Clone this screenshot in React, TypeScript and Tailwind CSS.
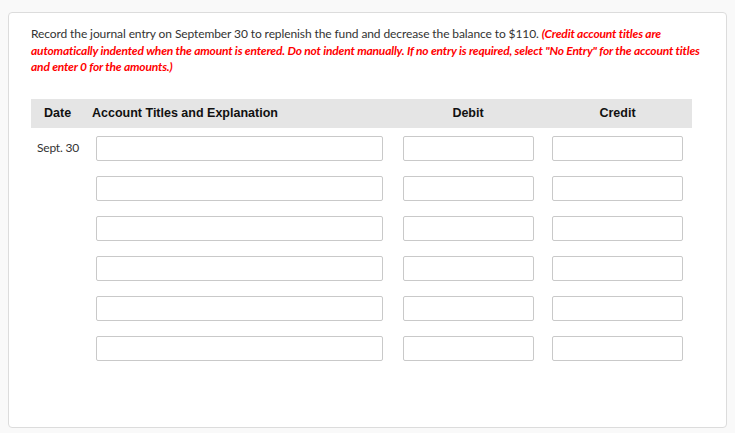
const rows = ["Sept. 30", "", "", "", "", ""];

function Field({ className }: { className: string }) {
  return (
    <input
      type="text"
      className={`h-[25px] border border-[#c9c9c9] rounded-[2px] bg-white outline-none ${className}`}
    />
  );
}

export default function App() {
  return (
    <div className="min-h-[433px] bg-[#f9f9f9] pt-[12px] pl-[8px] pr-[8px] pb-[5px] font-['Lato',sans-serif]">
      <div className="h-[416px] bg-white border border-[#dcdcdc] rounded-[4px] pt-[13px] pl-[22px] pr-[20px]">
        <p className="text-[12px] leading-[16.5px] text-[#333] tracking-[-0.1px]">
          Record the journal entry on September 30 to replenish the fund and decrease the balance to $110.{" "}
          <span className="text-[#ff0000] font-bold italic tracking-[-0.18px]">
            (Credit account titles are automatically indented when the amount is entered. Do not indent manually.
            If no entry is required, select "No Entry" for the account titles and enter 0 for the amounts.)
          </span>
        </p>

        <div className="mt-[23px] w-[661px]">
          <div className="flex h-[29px] items-center bg-[#e5e5e5] font-['Liberation_Sans',Arial,sans-serif] font-bold text-[12.5px] text-[#111]">
            <div className="w-[61px] pl-[13px]">Date</div>
            <div className="w-[301px]">Account Titles and Explanation</div>
            <div className="w-[150px] text-center">Debit</div>
            <div className="w-[149px] text-center">Credit</div>
          </div>

          <div className="flex flex-col gap-[15px] pt-[8px]">
            {rows.map((date, i) => (
              <div key={i} className="flex items-center">
                <div className="w-[61px] pl-[6px] text-[12px] text-[#333] tracking-[-0.2px]">{date}</div>
                <div className="w-[301px]">
                  <Field className="ml-[4px] w-[287px]" />
                </div>
                <div className="w-[150px] flex justify-center">
                  <Field className="w-[131px]" />
                </div>
                <div className="w-[149px] flex justify-center">
                  <Field className="w-[131px]" />
                </div>
              </div>
            ))}
          </div>
        </div>
      </div>
    </div>
  );
}
